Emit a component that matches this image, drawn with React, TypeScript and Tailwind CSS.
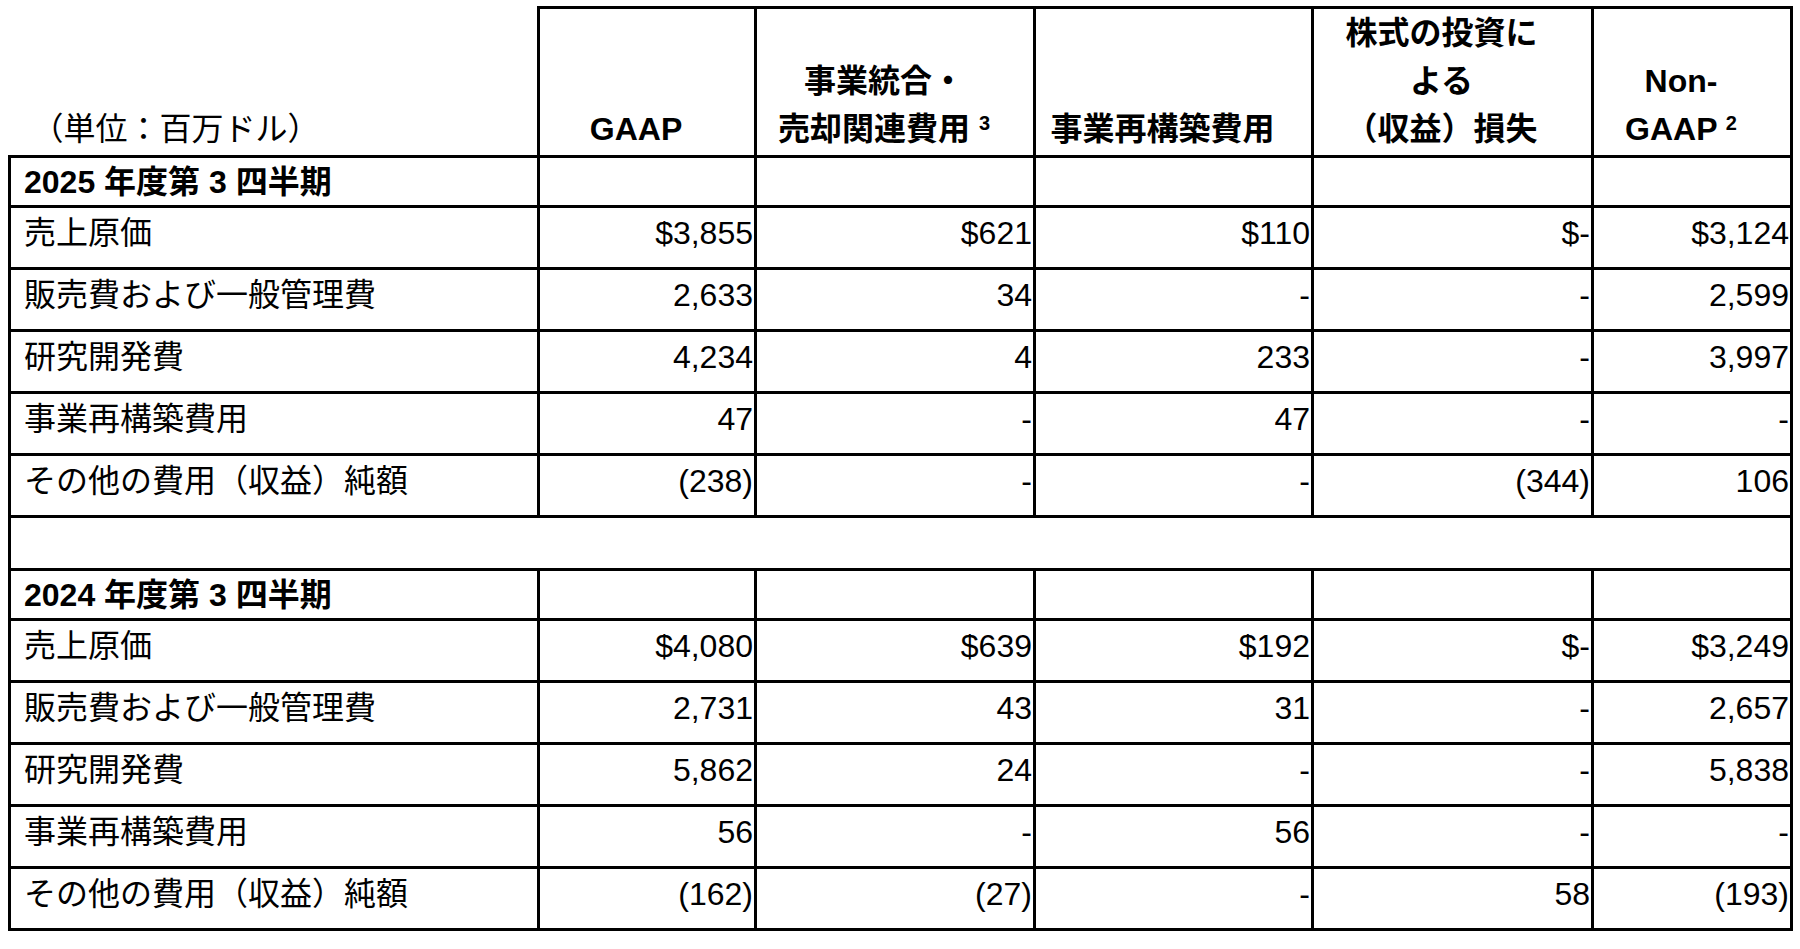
import React from 'react';

const q2025 = [
  ['売上原価', '$3,855', '$621', '$110', '$-', '$3,124'],
  ['販売費および一般管理費', '2,633', '34', '-', '-', '2,599'],
  ['研究開発費', '4,234', '4', '233', '-', '3,997'],
  ['事業再構築費用', '47', '-', '47', '-', '-'],
  ['その他の費用（収益）純額', '(238)', '-', '-', '(344)', '106'],
];

const q2024 = [
  ['売上原価', '$4,080', '$639', '$192', '$-', '$3,249'],
  ['販売費および一般管理費', '2,731', '43', '31', '-', '2,657'],
  ['研究開発費', '5,862', '24', '-', '-', '5,838'],
  ['事業再構築費用', '56', '-', '56', '-', '-'],
  ['その他の費用（収益）純額', '(162)', '(27)', '-', '58', '(193)'],
];

const cell = 'border-[3px] border-black p-0';
const head = `${cell} align-bottom text-center font-bold leading-[48px] pl-[2px] pr-[24px] pb-[2px]`;

function SectionRows({ title, rows }: { title: string; rows: string[][] }) {
  return (
    <>
      <tr className="h-[50px]">
        <td className={`${cell} pl-[13px] font-bold leading-[40px] align-middle`}>{title}</td>
        {[0, 1, 2, 3, 4].map((i) => (
          <td key={i} className={cell} />
        ))}
      </tr>
      {rows.map((r) => (
        <tr key={r[0]} className="h-[62px]">
          <td className={`${cell} pl-[13px] pb-[10px] leading-[40px] align-middle`}>{r[0]}</td>
          {r.slice(1).map((v, i) => (
            <td key={i} className={`${cell} text-right pr-[1px] pb-[10px] leading-[40px] align-middle`}>
              {v}
            </td>
          ))}
        </tr>
      ))}
    </>
  );
}

export default function App() {
  return (
    <div className="w-[1800px] h-[949px] bg-white overflow-hidden font-['Liberation_Sans','Noto_Sans_CJK_JP',sans-serif] text-[32px] text-black">
      <table className="table-fixed border-collapse w-[1782px] ml-[8px] mt-[6px]">
        <colgroup>
          <col className="w-[529px]" />
          <col className="w-[217px]" />
          <col className="w-[279px]" />
          <col className="w-[278px]" />
          <col className="w-[280px]" />
          <col className="w-[199px]" />
        </colgroup>
        <tbody>
          <tr className="h-[143px]">
            <td className="border-b-[3px] border-black align-bottom leading-[48px] pl-[22px] pb-[2px]">（単位：百万ドル）</td>
            <td className={head}>GAAP</td>
            <td className={head}>
              事業統合・
              <br />
              売却関連費用 <sup className="text-[20px]">3</sup>
            </td>
            <td className={head}>事業再構築費用</td>
            <td className={head}>
              株式の投資に
              <br />
              よる
              <br />
              （収益）損失
            </td>
            <td className={head}>
              Non-
              <br />
              GAAP <sup className="text-[20px]">2</sup>
            </td>
          </tr>
          <SectionRows title="2025 年度第 3 四半期" rows={q2025} />
          <tr className="h-[53px]">
            <td colSpan={6} className={cell} />
          </tr>
          <SectionRows title="2024 年度第 3 四半期" rows={q2024} />
        </tbody>
      </table>
    </div>
  );
}
